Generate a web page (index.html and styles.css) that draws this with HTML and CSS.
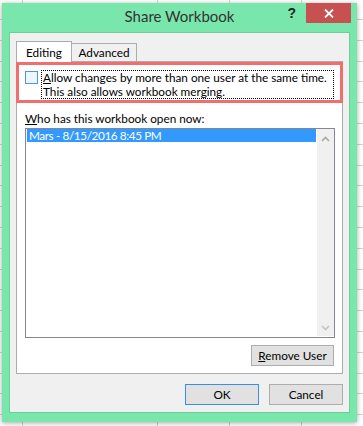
FILE: index.html
```html
<!DOCTYPE html>
<html>
<head>
<meta charset="utf-8">
<link rel="stylesheet" href="styles.css">
</head>
<body>
<div class="dialog">
  <div class="titlebar">
    <div></div>
    <div class="title">Share Workbook</div>
    <div class="controls">
      <span class="help">?</span>
      <span class="close">
        <svg width="10" height="9" viewBox="0 0 10 9"><path d="M1 0.5 L9 8.5 M9 0.5 L1 8.5" stroke="#fff" stroke-width="1.8" fill="none"/></svg>
      </span>
    </div>
  </div>
  <div class="body">
    <div class="tabs">
      <div class="tab active">Editing</div>
      <div class="tab">Advanced</div>
    </div>
    <div class="panel">
      <div class="highlight">
        <span class="checkbox"></span>
        <div class="focus"><u>A</u>llow changes by more than one user at the same time.<br>This also allows workbook merging.</div>
      </div>
      <div class="label"><u>W</u>ho has this workbook open now:</div>
      <div class="listbox">
        <div class="items">
          <div class="item selected">Mars - 8/15/2016 8:45 PM</div>
        </div>
        <div class="scrollbar">
          <svg width="9" height="6" viewBox="0 0 9 6"><path d="M1 5 L4.5 1.5 L8 5" stroke="#a8a8a8" stroke-width="1.6" fill="none"/></svg>
          <svg width="9" height="6" viewBox="0 0 9 6"><path d="M1 1 L4.5 4.5 L8 1" stroke="#c4c4c4" stroke-width="1.6" fill="none"/></svg>
        </div>
      </div>
      <button class="btn remove"><u>R</u>emove User</button>
    </div>
    <div class="actions">
      <button class="btn default">OK</button>
      <button class="btn">Cancel</button>
    </div>
  </div>
</div>
</body>
</html>
```

FILE: styles.css
```css
* { box-sizing: border-box; }
html, body { margin: 0; padding: 0; }
body {
  width: 363px;
  height: 426px;
  overflow: hidden;
  font-family: "Lato", "Liberation Sans", sans-serif;
  font-size: 11.75px;
  color: #000;
  background-color: #fff;
  background-image:
    linear-gradient(#d2d2d2, #d2d2d2),
    linear-gradient(#d2d2d2, #d2d2d2),
    linear-gradient(#d2d2d2, #d2d2d2),
    linear-gradient(#d2d2d2, #d2d2d2),
    repeating-linear-gradient(to bottom, transparent 0, transparent 19.8px, #d2d2d2 19.8px, #d2d2d2 20.8px);
  background-size: 1px 100%, 1px 100%, 1px 100%, 1px 100%, 100% 100%;
  background-position: 22px 0, 157px 0, 229px 0, 301px 0, 0 -0.8px;
  background-repeat: no-repeat;
  padding: 3px 0 0 2px;
}
.dialog {
  width: 355px;
  height: 419px;
  background: #79e6ab;
  box-shadow: 0 1px 5px rgba(0,0,0,0.35);
  display: flex;
  flex-direction: column;
}
.titlebar {
  height: 29px;
  display: grid;
  grid-template-columns: 1fr auto 1fr;
}
.title {
  font-family: "Lato", "Liberation Sans", sans-serif;
  font-size: 15px;
  color: #333;
  line-height: 27px;
  white-space: nowrap;
}
.controls {
  display: flex;
  justify-content: flex-end;
  align-items: center;
  height: 20px;
  padding-right: 6px;
}
.help {
  font-family: "Liberation Sans", sans-serif;
  font-weight: bold;
  font-size: 14px;
  color: #222;
  margin-right: 10px;
  line-height: 20px;
}
.close {
  width: 45px;
  height: 20px;
  background: #c75050;
  display: flex;
  align-items: center;
  justify-content: center;
}
.body {
  margin: 0 7px;
  height: 381px;
  background: #f0f0f0;
  border: 1px solid #6bcf98;
  padding: 8px 6px 0 6px;
}
.tabs {
  display: flex;
  align-items: flex-end;
  height: 20px;
}
.tab {
  border: 1px solid #acacac;
  border-bottom: none;
  border-left: none;
  text-align: center;
  height: 18px;
  line-height: 18px;
  width: 65px;
}
.tab.active {
  width: 56px;
  height: 21px;
  margin-bottom: -1px;
  background: #fff;
  border-left: 1px solid #acacac;
  position: relative;
  z-index: 1;
  line-height: 21px;
}
.panel {
  width: 327px;
  height: 313px;
  background: #fff;
  border: 1px solid #acacac;
  padding: 0 7px 0 8px;
  display: flex;
  flex-direction: column;
}
.highlight {
  margin: 0 -8px 0 -9px;
  height: 41px;
  border: 3px solid #f26e6e;
  padding: 5px 0 0 6px;
  display: flex;
  align-items: flex-start;
}
.checkbox {
  width: 13px;
  height: 13px;
  margin-top: 1px;
  border: 1px solid #4a98e4;
  background: #eef5fc;
  flex: none;
}
.focus {
  margin-left: 3px;
  width: 293px;
  border: 1px dotted #000;
  padding: 0 0 0 1px;
  line-height: 13.5px;
  white-space: nowrap;
}
.label {
  margin-top: 8px;
  line-height: 15px;
}
.listbox {
  margin-top: 2px;
  height: 210px;
  border: 1px solid #828790;
  display: flex;
}
.items {
  flex: 1;
  padding: 0 1px;
}
.item {
  height: 13px;
  line-height: 13px;
  padding-left: 2px;
  letter-spacing: -0.4px;
}
.item.selected {
  background: #3399ff;
  color: #fff;
}
.scrollbar {
  width: 17px;
  background: #f0f0f0;
  display: flex;
  flex-direction: column;
  justify-content: space-between;
  align-items: center;
  padding: 7px 0 5px;
  margin-bottom: 1px;
}
.btn {
  font-family: inherit;
  font-size: 11.75px;
  color: #000;
  background: #e1e1e1;
  border: 1px solid #adadad;
  height: 21px;
  width: 74px;
  padding: 0;
  line-height: 19px;
}
.remove {
  align-self: flex-end;
  width: 83px;
  margin-top: 7px;
  margin-right: 1px;
}
.actions {
  margin-top: 10px;
  display: flex;
  justify-content: flex-end;
  gap: 10px;
}
.default {
  border-color: #3a8fe3;
}
```
